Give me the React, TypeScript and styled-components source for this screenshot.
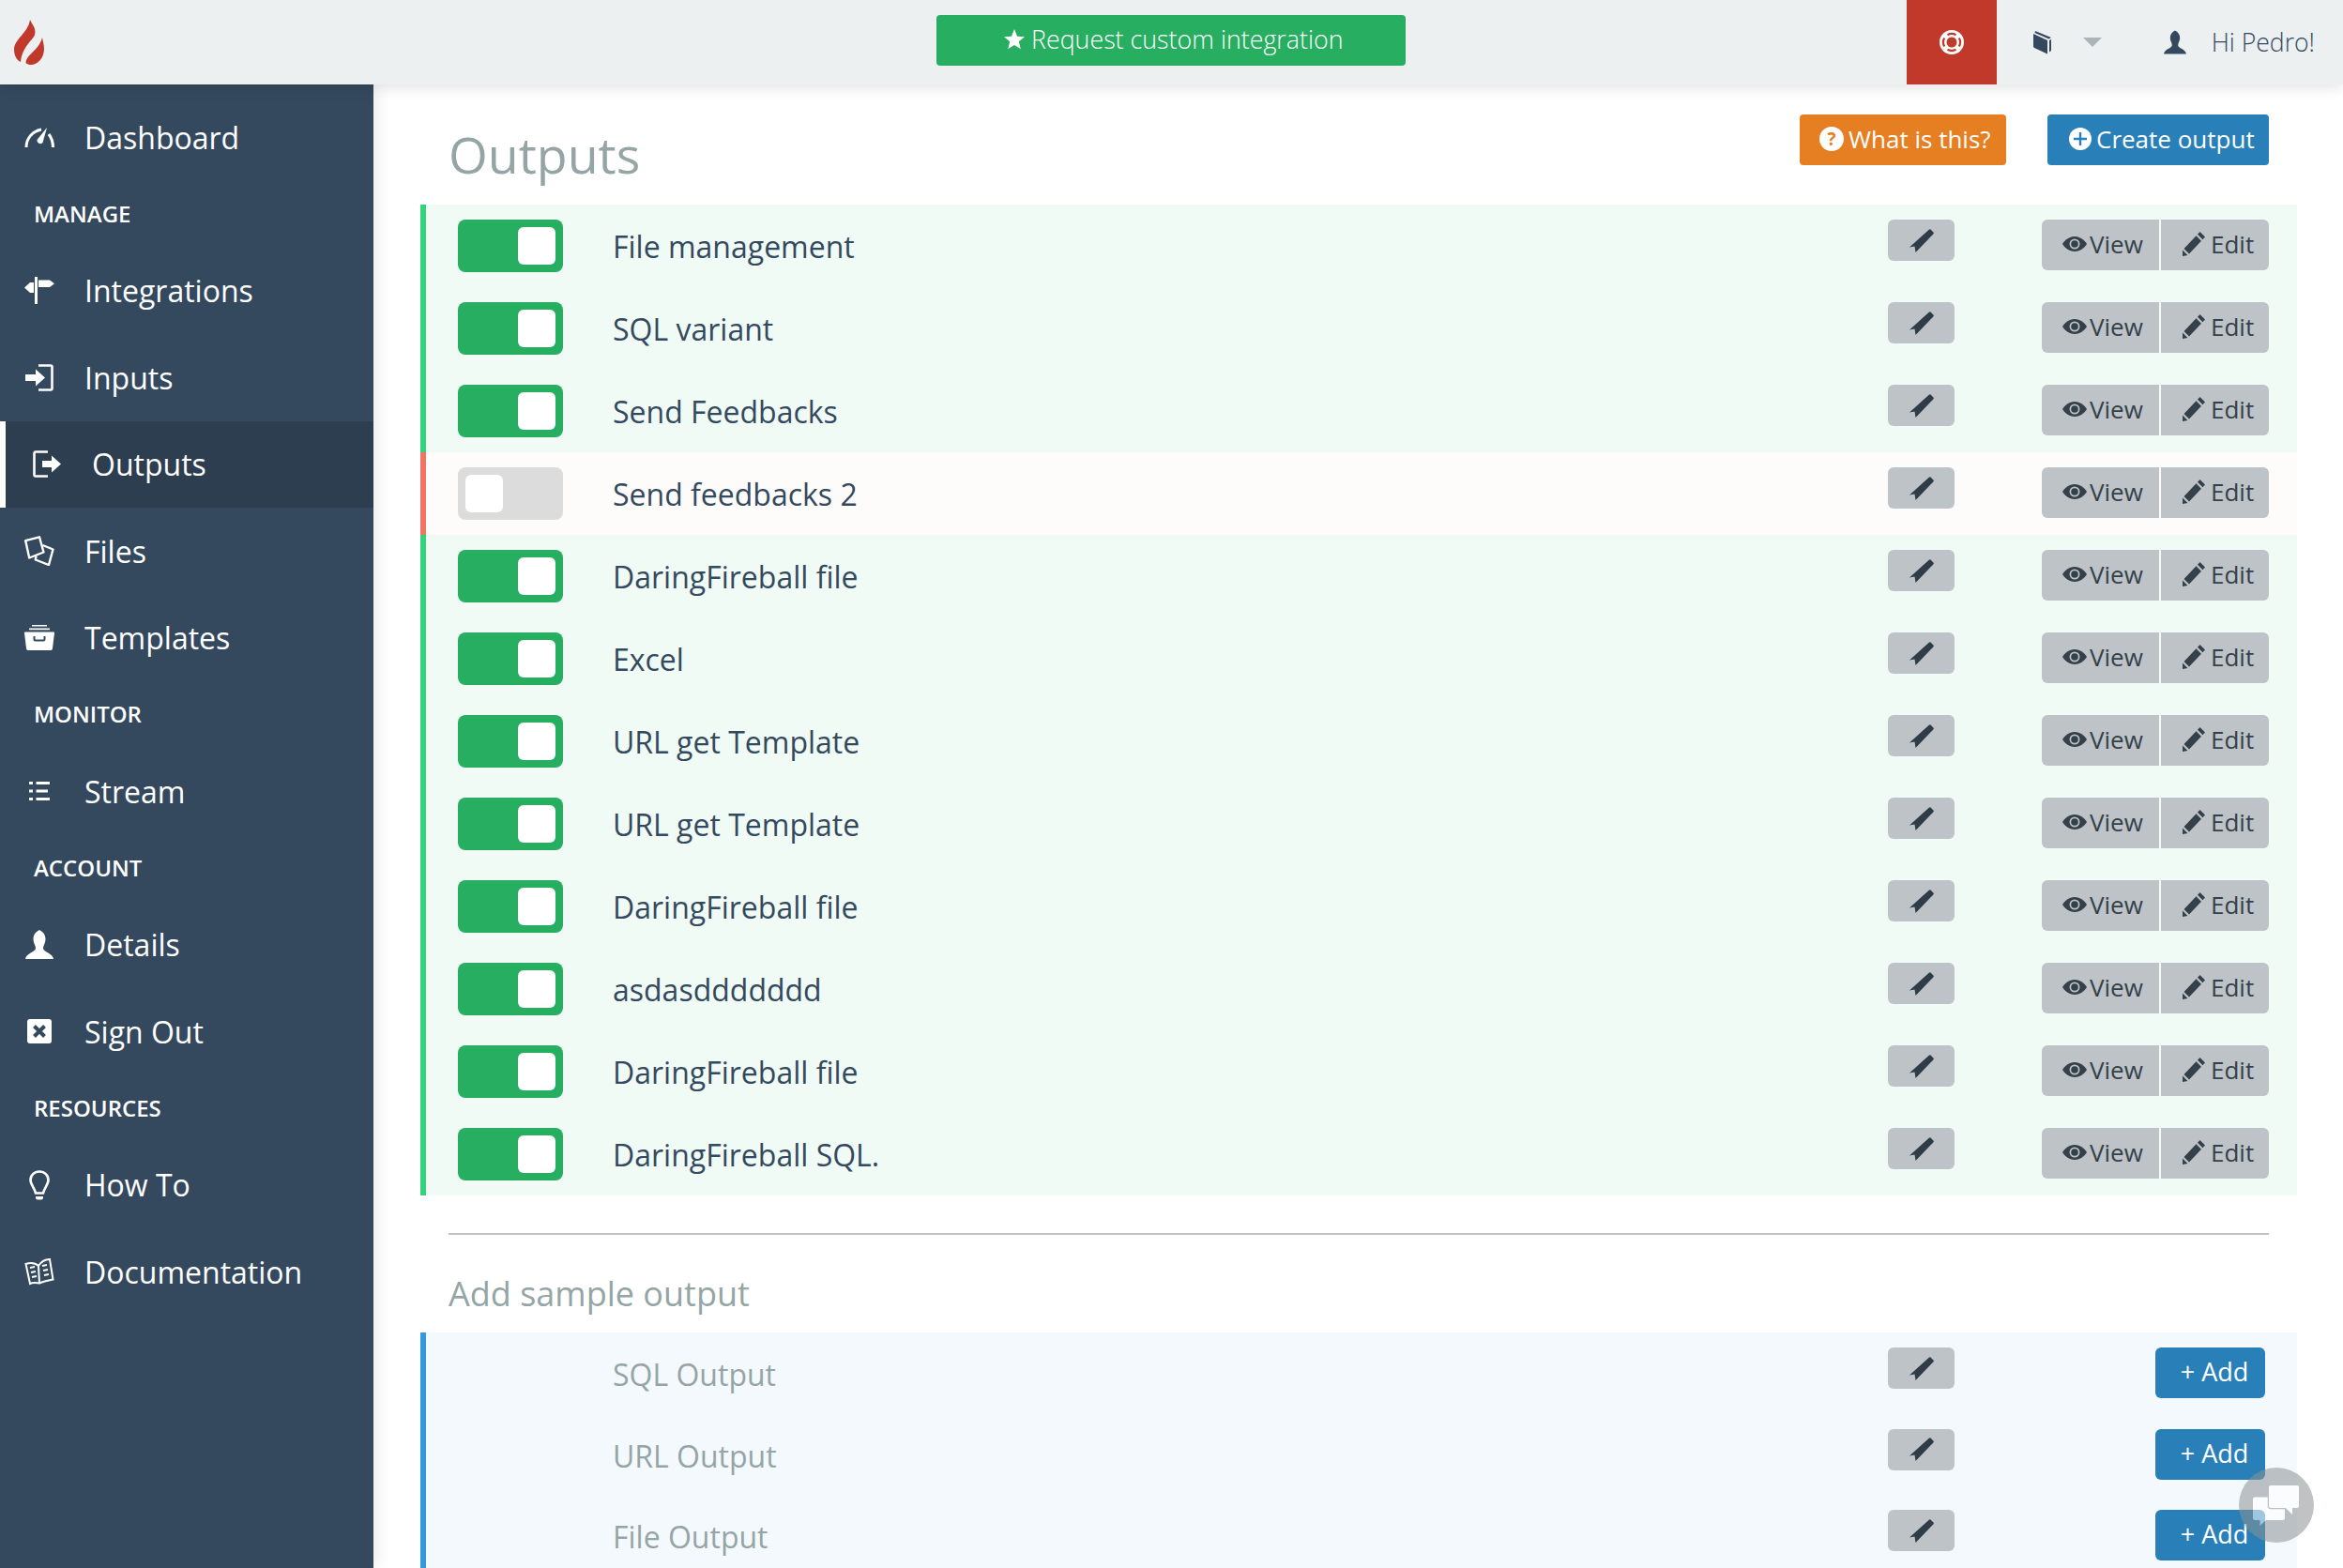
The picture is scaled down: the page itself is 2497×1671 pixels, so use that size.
import React, { FC } from "react";
import styled, { createGlobalStyle } from "styled-components";

const GlobalStyle = createGlobalStyle`
  html, body {
    margin: 0;
    height: 100%;
    overflow: hidden;
    background: #fff;
    font-family: "Open Sans", "Noto Sans", sans-serif;
  }
  * { box-sizing: border-box; }
`;

const NAVY = "#34495e";

const Glyph = styled.svg<{ $w: number; $h: number }>`
  display: block;
  flex: none;
  width: ${(p) => p.$w}px;
  height: ${(p) => p.$h}px;
`;

const Gauge = () => (
  <Glyph $w={32} $h={21} viewBox="0 0 32 21" fill="none" stroke="#fff" strokeWidth="3">
    <path d="M2 21C2 12 8 4 18 2" />
    <path d="M26 7C29 11 30.5 16 30.5 21" />
    <path d="M24 0L19.5 16a3.5 3.5 0 0 1-6-3z" fill="#fff" stroke="none" />
  </Glyph>
);
const Signpost = () => (
  <Glyph $w={32} $h={29} viewBox="0 0 32 29" fill="#fff">
    <path d="M11 0h3v29h-3z" />
    <path d="M10 6v11H6L0 11.500 6 6z" />
    <path d="M15 3.500h12l5 3.700-5 3.800H15z" />
  </Glyph>
);
const Login = () => (
  <Glyph $w={30} $h={29} viewBox="0 0 30 29" fill="#fff">
    <path d="M14 1.500h13a1.500 1.500 0 0 1 1.500 1.500v23a1.500 1.500 0 0 1-1.500 1.500H14" fill="none" stroke="#fff" strokeWidth="2.600" />
    <path d="M0 11h11V5.500L21 14.500 11 23.500V18H0z" />
  </Glyph>
);
const Logout = () => (
  <Glyph $w={30} $h={29} viewBox="0 0 30 29" fill="#fff">
    <path d="M16 1.500H3A1.500 1.500 0 0 0 1.500 3v23A1.500 1.500 0 0 0 3 27.500h13" fill="none" stroke="#fff" strokeWidth="2.600" />
    <path d="M10 11h10V5.500L30 14.500 20 23.500V18H10z" />
  </Glyph>
);
const Files = () => (
  <Glyph $w={32} $h={32} viewBox="0 0 32 32" fill="none" stroke="#fff" strokeWidth="2.400" strokeLinejoin="round">
    <path d="M1.200 5.200L16 1.300 20.500 17.500 5.200 23.500z" />
    <path d="M19.500 10L30.500 14.500 26 31 11.800 25.500 12.500 21.500" />
  </Glyph>
);
const Inbox = () => (
  <Glyph $w={32} $h={27} viewBox="0 0 32 27" fill="#fff">
    <path d="M8 0h16v1.600H8zM5 3.500h22v1.800H5z" />
    <path d="M1 7.500h30c.7 0 1 .5 1 1L30 25a2 2 0 0 1-2 2H4a2 2 0 0 1-2-2L0 8.500c0-.5.3-1 1-1z" />
    <path d="M10.500 12v3.500a1 1 0 0 0 1 1h9a1 1 0 0 0 1-1V12" fill="none" stroke={NAVY} strokeWidth="2" />
  </Glyph>
);
const ListLines = () => (
  <Glyph $w={22} $h={20} viewBox="0 0 22 20" fill="#fff">
    <path d="M0 0h4v3H0zM0 8.500h4v3H0zM0 17h4v3H0z" />
    <path d="M7.500 0H22v3H7.500zM7.500 8.500H20v3H7.500zM7.500 17H22v3H7.500z" />
  </Glyph>
);
const UserIcon: FC<{ color: string; w: number; h: number }> = ({ color, w, h }) => (
  <Glyph $w={w} $h={h} viewBox="0 0 30 31" fill={color}>
    <path d="M15 0C10.500 2.500 8.500 5.500 8.500 10c0 4 2.500 6.500 2.500 9.500 0 4-10 5-11 11.500h30c-1-6.500-11-7.500-11-11.500 0-3 2.500-5.500 2.500-9.500C21.500 5.500 19.500 2.500 15 0z" />
  </Glyph>
);
const CrossBox = () => (
  <Glyph $w={26} $h={26} viewBox="0 0 26 26">
    <rect width="26" height="26" rx="3" fill="#fff" />
    <path d="M7.500 7.500l11 11M18.500 7.500l-11 11" stroke={NAVY} strokeWidth="4" />
  </Glyph>
);
const Bulb = () => (
  <Glyph $w={22} $h={32} viewBox="0 0 22 32" fill="none" stroke="#fff" strokeWidth="2.600">
    <path d="M11 1.500C5.500 1.500 1.500 5.500 1.500 10.500c0 5 4.500 8.500 5.500 14h8c1-5.500 5.500-9 5.500-14 0-5-4-9-9.500-9z" />
    <path d="M7 28h8v1.500a2 2 0 0 1-2 2H9a2 2 0 0 1-2-2z" fill="#fff" stroke="none" />
  </Glyph>
);
const OpenBook = () => (
  <Glyph $w={32} $h={30} viewBox="0 0 32 30" fill="none" stroke="#fff" strokeWidth="2">
    <path d="M15 9C11 5.500 6 5.500 1.500 7L6 28c3-1.500 7-1 10-.5 4-2 9-3 14.500-4L27 2c-5 0-9 2.500-12 7zM15 9l1 18.500" />
    <path d="M6 11l5-1M7 16l5-1M8 21l5-1M19 9l5-1M20 14l5-1M21 19l5-1" strokeWidth="1.800" />
  </Glyph>
);
const Flame = () => (
  <Glyph $w={32} $h={48} viewBox="0 0 32 48" fill="#c0392b">
    <path d="M17 0C19 5 24 9 22 16 20 22 9 28 7 45 2 43 0 37 0 31 1 20 15 14 17 0z" />
    <path d="M30 19C31 24 32 27 32 31 32 41 25 48 18 48 16 48 14 47.500 12.500 46 13 37 27 32 30 19z" />
  </Glyph>
);
const Star = () => (
  <Glyph $w={22} $h={22} viewBox="0 0 22 22" fill="#fff">
    <path d="M11 0l3 7.700 8 .5-6.200 5.100 2 8L11 16.900 4.200 21.300l2-8L0 8.200l8-.5z" />
  </Glyph>
);
const LifeBuoy = () => (
  <Glyph $w={26} $h={26} viewBox="0 0 26 26" fill="none">
    <circle cx="13" cy="13" r="13" fill="#fff" />
    <circle cx="13" cy="13" r="5.500" fill="#c0392b" />
    <path
      d="M8.500 5.200A9 9 0 0 1 17.500 5.200M20.800 8.500A9 9 0 0 1 20.800 17.500M17.500 20.800A9 9 0 0 1 8.500 20.800M5.200 17.500A9 9 0 0 1 5.200 8.500"
      stroke="#c0392b"
      strokeWidth="2.200"
    />
  </Glyph>
);
const ClosedBook = () => (
  <Glyph $w={19} $h={25} viewBox="0 0 19 25" fill={NAVY}>
    <path d="M2 0L19 7l-2.500 1.500L1.500 2z" />
    <path d="M0 3l15 7v14.500L1 18c-.7-.4-1-1-1-1.500z" />
    <path d="M17 10l2-1v12l-2 1.500z" />
  </Glyph>
);
const Eye = () => (
  <Glyph $w={26} $h={16} viewBox="0 0 26 16">
    <path d="M13 0C7 0 2.500 4 0 8c2.500 4 7 8 13 8s10.500-4 13-8c-2.500-4-7-8-13-8z" fill="#34404a" />
    <circle cx="13" cy="8" r="5.500" fill="#bdc3c7" />
    <circle cx="13" cy="8" r="3.800" fill="#34404a" />
  </Glyph>
);
const Pencil = () => (
  <Glyph $w={24} $h={26} viewBox="0 0 24 26" fill="#34404a">
    <path d="M18.500 0l5.500 5.500-2.500 2.800L16 2.800zM14.500 4.300L20 9.800 7 23.500 1.500 18zM0 19.500L5.500 25 0 26z" />
  </Glyph>
);
const Ribbon = () => (
  <Glyph $w={26} $h={25} viewBox="0 0 26 25" fill="#2f3c47">
    <path d="M21 .5a1.500 1.500 0 0 1 1.500 0L25.500 3.500a1.500 1.500 0 0 1 0 1.800L6.500 25l-1-6.500L0 19.500z" />
  </Glyph>
);
const PlusCircle = () => (
  <Glyph $w={24} $h={24} viewBox="0 0 24 24">
    <circle cx="12" cy="12" r="12" fill="#fff" />
    <path d="M12 5v14M5 12h14" stroke="#2980b9" strokeWidth="2.400" />
  </Glyph>
);
const ChatBubbles = () => (
  <Glyph $w={50} $h={43} viewBox="0 0 50 43" fill="#fff">
    <path d="M2 12.500h30a2 2 0 0 1 2 2V35a2 2 0 0 1-2 2H14l-6.500 6v-6H2a2 2 0 0 1-2-2V14.500a2 2 0 0 1 2-2z" />
    <path
      d="M19 0h28a2 2 0 0 1 2 2v20a2 2 0 0 1-2 2h-5v7l-7-7H19a2 2 0 0 1-2-2V2a2 2 0 0 1 2-2z"
      stroke="#8a9394"
      strokeWidth="2.500"
      paintOrder="stroke"
    />
  </Glyph>
);

const Page = styled.div`
  height: 100vh;
  display: flex;
  flex-direction: column;
  overflow: hidden;
`;

const TopBar = styled.header`
  position: relative;
  z-index: 3;
  flex: none;
  height: 90px;
  display: flex;
  align-items: center;
  background: #ecf0f1;
  box-shadow: 0 3px 14px rgba(0, 0, 0, 0.12);
  padding-left: 15px;
`;

const RequestButton = styled.div`
  margin: 0 0 4px 951px;
  width: 500px;
  height: 54px;
  padding: 0 0 3px 72px;
  display: flex;
  align-items: center;
  gap: 7px;
  background: #27ae60;
  border-radius: 4px;
  color: #fff;
  font-size: 26.8px;
  font-weight: 300;
`;

const HelpTab = styled.div`
  margin-left: auto;
  width: 96px;
  height: 90px;
  display: flex;
  align-items: center;
  justify-content: center;
  background: #c0392b;
`;

const BookSlot = styled.div`
  margin-left: 39px;
`;

const Caret = styled.div`
  margin-left: 34px;
  width: 0;
  height: 0;
  border-left: 10px solid transparent;
  border-right: 10px solid transparent;
  border-top: 10px solid #aab4bb;
`;

const UserSlot = styled.div`
  margin-left: 66px;
`;

const Greeting = styled.span`
  margin-left: 27px;
  margin-right: 30px;
  color: ${NAVY};
  font-size: 26.6px;
  font-weight: 300;
`;

const Body = styled.div`
  flex: 1;
  display: flex;
  min-height: 0;
`;

const Sidebar = styled.nav`
  position: relative;
  z-index: 2;
  flex: none;
  width: 398px;
  padding-top: 10px;
  background: ${NAVY};
  box-shadow: 0 0 18px rgba(0, 0, 0, 0.12);
`;

const NavItem = styled.div<{ $active?: boolean }>`
  height: 92.5px;
  display: flex;
  align-items: center;
  color: #fff;
  font-size: 32px;
  font-weight: 400;
  padding-left: ${(p) => (p.$active ? 28 : 26)}px;
  background: ${(p) => (p.$active ? "#2c3e50" : "transparent")};
  border-left: ${(p) => (p.$active ? "6px solid #fff" : "0")};
`;

const NavIcon = styled.span`
  width: 32px;
  margin-right: 32px;
  display: flex;
  justify-content: center;
`;

const NavSection = styled.div`
  height: 71px;
  display: flex;
  align-items: center;
  padding: 0 0 2px 36px;
  color: #fff;
  font-size: 24px;
  font-weight: 600;
`;

const Main = styled.main`
  flex: 1;
  min-width: 0;
  padding: 32px 49px 0 50px;
`;

const PageHead = styled.div`
  height: 96px;
  display: flex;
  align-items: flex-start;
  padding: 0 30px;
`;

const Title = styled.h1`
  margin: 8px auto 0 0;
  height: 70px;
  color: #95a5a6;
  font-size: 53.7px;
  line-height: 70px;
  font-weight: 400;
`;

const HeadButton = styled.div<{ $bg: string; $w: number; $inset: number }>`
  width: ${(p) => p.$w}px;
  height: 54px;
  padding: 0 0 2px ${(p) => p.$inset}px;
  display: flex;
  align-items: center;
  gap: 5px;
  background: ${(p) => p.$bg};
  border-radius: 4px;
  color: #fff;
  font-size: 26px;
`;

const HeadButtons = styled.div`
  display: flex;
  gap: 44px;
`;

const QuestionMark = styled.span`
  width: 26px;
  height: 26px;
  border-radius: 50%;
  background: #fff;
  color: #e67e22;
  font-size: 19px;
  font-weight: 700;
  line-height: 26px;
  text-align: center;
`;

const Row = styled.div<{ $tone: "on" | "off" | "sample" }>`
  display: flex;
  align-items: flex-start;
  height: ${(p) => (p.$tone === "sample" ? 86.5 : 88)}px;
  padding: 16px 30px 0 34px;
  border-left: 6px solid
    ${(p) => (p.$tone === "on" ? "#34d27b" : p.$tone === "off" ? "#ef7565" : "#3498db")};
  background: ${(p) => (p.$tone === "on" ? "#f0fbf6" : p.$tone === "off" ? "#fdfcfa" : "#f4f9fd")};
`;

const Toggle = styled.div<{ $on: boolean }>`
  flex: none;
  width: 112px;
  height: 56px;
  padding: 8px;
  display: flex;
  justify-content: ${(p) => (p.$on ? "flex-end" : "flex-start")};
  border-radius: 8px;
  background: ${(p) => (p.$on ? "#27ae60" : "#dcdcdc")};
`;

const Knob = styled.div`
  width: 40px;
  height: 40px;
  border-radius: 6px;
  background: #fff;
`;

const ToggleGap = styled.div`
  flex: none;
  width: 112px;
`;

const RowName = styled.div<{ $muted?: boolean }>`
  flex: 1;
  margin-left: 53px;
  color: ${(p) => (p.$muted ? "#95a5a6" : NAVY)};
  font-size: 32px;
  line-height: 58px;
`;

const TagButton = styled.div`
  flex: none;
  width: 71px;
  height: 44px;
  display: flex;
  align-items: center;
  justify-content: center;
  background: #bdc3c7;
  border-radius: 6px;
`;

const ActionCol = styled.div`
  flex: none;
  width: 335px;
  display: flex;
  justify-content: flex-end;
`;

const BtnGroup = styled.div`
  display: flex;
  gap: 2px;
`;

const GroupBtn = styled.div<{ $w: number; $inset: number; $first?: boolean }>`
  width: ${(p) => p.$w}px;
  height: 54px;
  padding: 0 0 2px ${(p) => p.$inset}px;
  display: flex;
  align-items: center;
  gap: ${(p) => (p.$first ? 3 : 6)}px;
  background: #bdc3c7;
  color: #34404a;
  font-size: 26px;
  border-radius: ${(p) => (p.$first ? "6px 0 0 6px" : "0 6px 6px 0")};
`;

const AddButton = styled.div`
  width: 117px;
  height: 54px;
  margin-right: 4px;
  padding: 0 0 3px 9px;
  display: flex;
  align-items: center;
  justify-content: center;
  background: #2980b9;
  border-radius: 6px;
  color: #fff;
  font-size: 27px;
`;

const Divider = styled.hr`
  margin: 40px 30px 0;
  border: 0;
  border-top: 2px solid #bdc3c7;
`;

const SubTitle = styled.h2`
  margin: 0;
  height: 104px;
  padding: 38px 0 0 30px;
  color: #95a5a6;
  font-size: 36px;
  line-height: 50px;
  font-weight: 400;
`;

const ChatWidget = styled.div`
  position: fixed;
  left: 2386px;
  top: 1564px;
  z-index: 5;
  width: 80px;
  height: 80px;
  border-radius: 50%;
  display: flex;
  align-items: center;
  justify-content: center;
  background: #8a9394;
  opacity: 0.55;
`;

type NavEntry = { label: string; icon?: React.ReactNode; active?: boolean };

const NAV: NavEntry[] = [
  { label: "Dashboard", icon: <Gauge /> },
  { label: "MANAGE" },
  { label: "Integrations", icon: <Signpost /> },
  { label: "Inputs", icon: <Login /> },
  { label: "Outputs", icon: <Logout />, active: true },
  { label: "Files", icon: <Files /> },
  { label: "Templates", icon: <Inbox /> },
  { label: "MONITOR" },
  { label: "Stream", icon: <ListLines /> },
  { label: "ACCOUNT" },
  { label: "Details", icon: <UserIcon color="#fff" w={30} h={31} /> },
  { label: "Sign Out", icon: <CrossBox /> },
  { label: "RESOURCES" },
  { label: "How To", icon: <Bulb /> },
  { label: "Documentation", icon: <OpenBook /> },
];

const OUTPUTS = [
  { name: "File management", on: true },
  { name: "SQL variant", on: true },
  { name: "Send Feedbacks", on: true },
  { name: "Send feedbacks 2", on: false },
  { name: "DaringFireball file", on: true },
  { name: "Excel", on: true },
  { name: "URL get Template", on: true },
  { name: "URL get Template", on: true },
  { name: "DaringFireball file", on: true },
  { name: "asdasddddddd", on: true },
  { name: "DaringFireball file", on: true },
  { name: "DaringFireball SQL.", on: true },
];

const SAMPLES = ["SQL Output", "URL Output", "File Output"];

const App: FC = () => {
  return (
    <Page>
      <GlobalStyle />
      <TopBar>
        <Flame />
        <RequestButton>
          <Star />
          Request custom integration
        </RequestButton>
        <HelpTab>
          <LifeBuoy />
        </HelpTab>
        <BookSlot>
          <ClosedBook />
        </BookSlot>
        <Caret />
        <UserSlot>
          <UserIcon color={NAVY} w={24} h={26} />
        </UserSlot>
        <Greeting>Hi Pedro!</Greeting>
      </TopBar>
      <Body>
        <Sidebar>
          {NAV.map((item) =>
            item.icon ? (
              <NavItem key={item.label} $active={item.active}>
                <NavIcon>{item.icon}</NavIcon>
                {item.label}
              </NavItem>
            ) : (
              <NavSection key={item.label}>{item.label}</NavSection>
            )
          )}
        </Sidebar>
        <Main>
          <PageHead>
            <Title>Outputs</Title>
            <HeadButtons>
              <HeadButton $bg="#e67e22" $w={220} $inset={21}>
                <QuestionMark>?</QuestionMark>
                What is this?
              </HeadButton>
              <HeadButton $bg="#2980b9" $w={236} $inset={23}>
                <PlusCircle />
                Create output
              </HeadButton>
            </HeadButtons>
          </PageHead>
          {OUTPUTS.map((row, i) => (
            <Row key={i} $tone={row.on ? "on" : "off"}>
              <Toggle $on={row.on}>
                <Knob />
              </Toggle>
              <RowName>{row.name}</RowName>
              <TagButton>
                <Ribbon />
              </TagButton>
              <ActionCol>
                <BtnGroup>
                  <GroupBtn $w={125} $inset={22} $first>
                    <Eye />
                    View
                  </GroupBtn>
                  <GroupBtn $w={115} $inset={23}>
                    <Pencil />
                    Edit
                  </GroupBtn>
                </BtnGroup>
              </ActionCol>
            </Row>
          ))}
          <Divider />
          <SubTitle>Add sample output</SubTitle>
          {SAMPLES.map((name) => (
            <Row key={name} $tone="sample">
              <ToggleGap />
              <RowName $muted>{name}</RowName>
              <TagButton>
                <Ribbon />
              </TagButton>
              <ActionCol>
                <AddButton>+ Add</AddButton>
              </ActionCol>
            </Row>
          ))}
        </Main>
      </Body>
      <ChatWidget>
        <ChatBubbles />
      </ChatWidget>
    </Page>
  );
};

export default App;
